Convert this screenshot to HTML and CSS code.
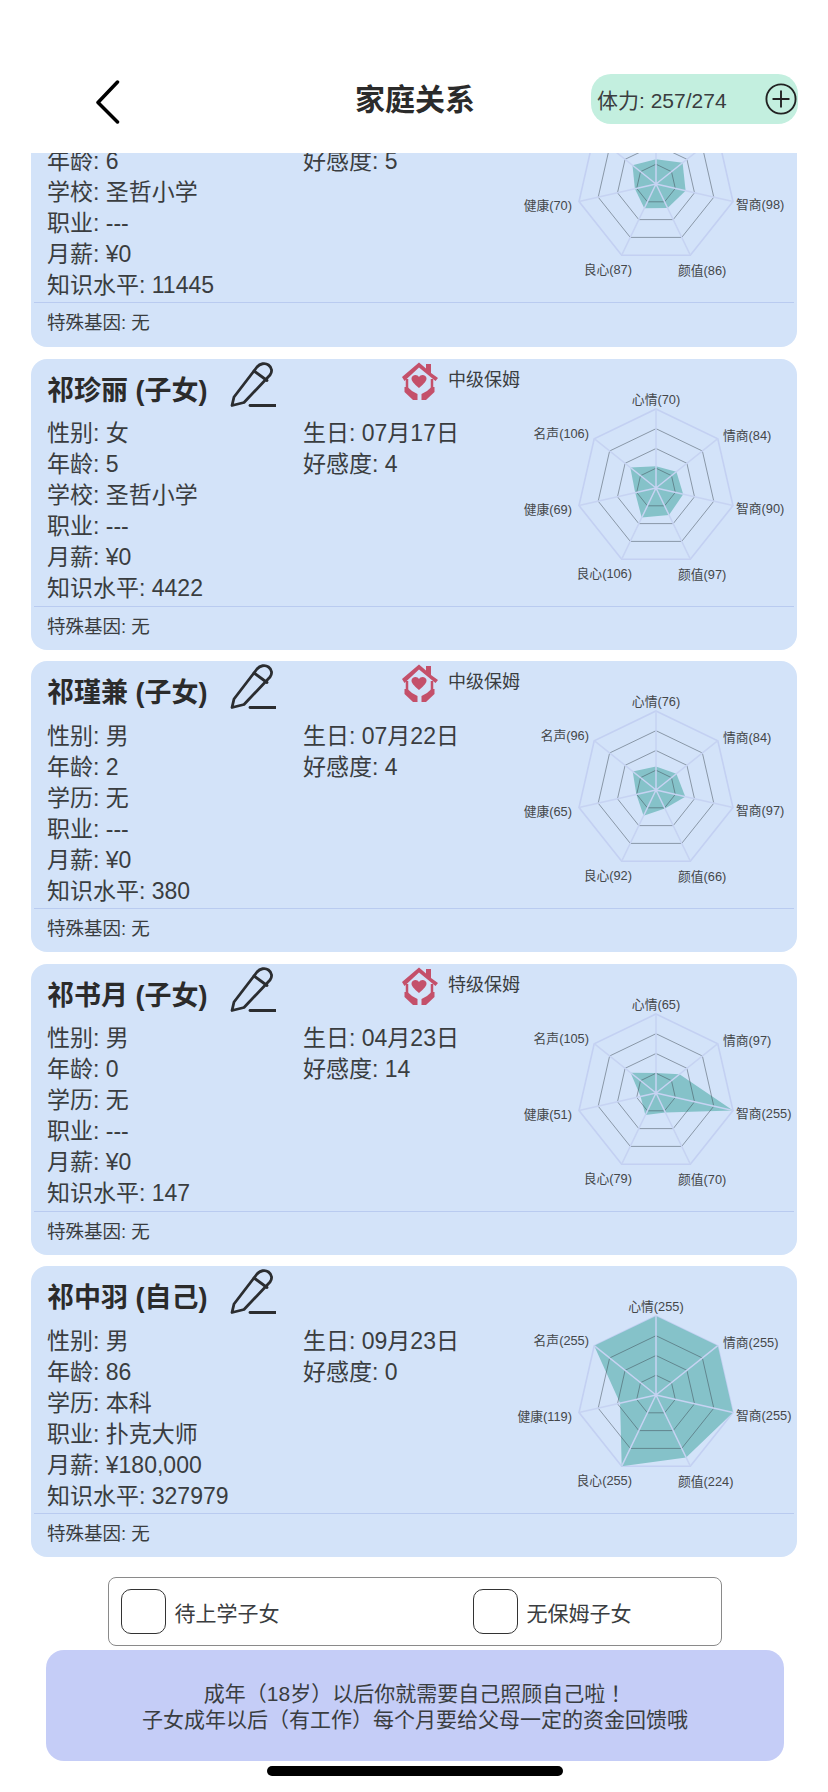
FILE: index.html
```html
<!DOCTYPE html>
<html lang="zh-CN">
  <head>
    <meta charset="utf-8">
    <title>家庭关系</title>
    <link rel="stylesheet" href="styles.css">
  </head>
  <body>
    <!-- shared drawings -->
    <svg class="defs" width="0" height="0">
      <defs>
        <g id="radar-outer">
          <polygon class="ring-outer" points="0,-79 61.8,-49.3 77,17.6 34.3,71.2 -34.3,71.2 -77,17.6 -61.8,-49.3"/>
        </g>
        <g id="radar-lines">
          <polygon class="ring" points="0,-59.3 46.4,-37 57.8,13.2 25.7,53.4 -25.7,53.4 -57.8,13.2 -46.4,-37"/>
          <polygon class="ring" points="0,-39.5 30.9,-24.7 38.5,8.8 17.2,35.6 -17.2,35.6 -38.5,8.8 -30.9,-24.7"/>
          <polygon class="ring" points="0,-19.8 15.5,-12.3 19.3,4.4 8.6,17.8 -8.6,17.8 -19.3,4.4 -15.5,-12.3"/>
          <path class="spoke" d="M0 0L0 -79M0 0L61.8 -49.3M0 0L77 17.6M0 0L34.3 71.2M0 0L-34.3 71.2M0 0L-77 17.6M0 0L-61.8 -49.3"/>
        </g>
        <g id="pencil">
          <path class="pencil-line" d="M2 43.5L4 35L27 5C30 1.5 35 0.5 38.5 3C42 5.5 42.5 10 40 13L14 40.5Z"/>
          <path class="pencil-line" d="M24 9L37 18.5"/>
          <path class="pencil-line" d="M20 43.5L46 43.5"/>
        </g>
        <g id="nanny">
          <path class="nanny-roof" d="M0 15L17 0.5L24 6.5L24 2L29 2L29 11L36 16L33.5 19L17 5.5L2.5 19Z"/>
          <path class="nanny-wall" d="M5 17L5 26M30 17L30 26"/>
          <path class="nanny-heart" d="M17 26C11 21 9.5 18.5 9.5 16.5C9.5 14.5 11.5 13 13.5 13C15 13 16.2 13.8 17 15C17.8 13.8 19 13 20.5 13C22.5 13 24.5 14.5 24.5 16.5C24.5 18.5 23 21 17 26Z"/>
          <path class="nanny-heart" d="M2.5 25L5.5 25L10 29L15.5 32L15.5 38L11 38L2.5 30ZM32.5 25L29.5 25L25 29L19.5 32L19.5 38L24 38L32.5 30Z"/>
        </g>
      </defs>
    </svg>

    <header class="topbar">
      <div class="topbar-left">
        <svg class="back" width="24" height="44" viewBox="0 0 24 44">
          <path d="M21.5 2L2 22.5L21.5 42"/>
        </svg>
      </div>
      <h1 class="title">家庭关系</h1>
      <div class="topbar-right">
        <div class="stamina">
          <span>体力: 257/274</span>
          <svg class="plus" width="32" height="32" viewBox="0 0 34 34">
            <circle cx="17" cy="17" r="15.5"/>
            <path d="M8 17L26 17M17 8L17 26"/>
          </svg>
        </div>
      </div>
    </header>

    <main class="list">
      <section class="card card-cut">
        <div class="card-main">
          <div class="card-info">
            <div class="facts">
              <div class="facts-col">
                <div>年龄: 6</div>
                <div>学校: 圣哲小学</div>
                <div>职业: ---</div>
                <div>月薪: ¥0</div>
                <div>知识水平: 11445</div>
              </div>
              <div class="facts-col">
                <div>好感度: 5</div>
              </div>
            </div>
          </div>
          <svg class="radar" width="280" height="200" viewBox="-140 -100 280 200">
            <use href="#radar-outer"/>
            <polygon class="value" points="0,-24.8 26.6,-21.2 29.6,6.8 11.6,24 -11.7,24.3 -21.1,4.8 -23.5,-18.7"/>
            <use href="#radar-lines"/>
            <text x="80" y="24.5">智商(98)</text>
            <text x="22" y="90.5">颜值(86)</text>
            <text class="end" x="-24" y="89.5">良心(87)</text>
            <text class="end" x="-84" y="25.5">健康(70)</text>
          </svg>
        </div>
        <div class="gene">特殊基因: 无</div>
      </section>

      <section class="card">
        <div class="card-main">
          <div class="card-info">
            <div class="card-head">
              <h2 class="name">祁珍丽 (子女)</h2>
              <svg class="pencil" width="46" height="45" viewBox="0 0 46 45"><use href="#pencil"/></svg>
              <div class="nanny">
                <svg width="36" height="38" viewBox="0 0 36 38"><use href="#nanny"/></svg>
                <span>中级保姆</span>
              </div>
            </div>
            <div class="facts">
              <div class="facts-col">
                <div>性别: 女</div>
                <div>年龄: 5</div>
                <div>学校: 圣哲小学</div>
                <div>职业: ---</div>
                <div>月薪: ¥0</div>
                <div>知识水平: 4422</div>
              </div>
              <div class="facts-col">
                <div>生日: 07月17日</div>
                <div>好感度: 4</div>
              </div>
            </div>
          </div>
          <svg class="radar" width="280" height="200" viewBox="-140 -100 280 200">
            <use href="#radar-outer"/>
            <polygon class="value" points="0,-21.7 20.4,-16.2 27.2,6.2 13,27.1 -14.3,29.6 -20.8,4.8 -25.7,-20.5"/>
            <use href="#radar-lines"/>
            <text class="mid" x="0" y="-84">心情(70)</text>
            <text x="67" y="-48">情商(84)</text>
            <text x="80" y="24.5">智商(90)</text>
            <text x="22" y="90.5">颜值(97)</text>
            <text class="end" x="-24" y="89.5">良心(106)</text>
            <text class="end" x="-84" y="25.5">健康(69)</text>
            <text class="end" x="-67" y="-50">名声(106)</text>
          </svg>
        </div>
        <div class="gene">特殊基因: 无</div>
      </section>

      <section class="card">
        <div class="card-main">
          <div class="card-info">
            <div class="card-head">
              <h2 class="name">祁瑾兼 (子女)</h2>
              <svg class="pencil" width="46" height="45" viewBox="0 0 46 45"><use href="#pencil"/></svg>
              <div class="nanny">
                <svg width="36" height="38" viewBox="0 0 36 38"><use href="#nanny"/></svg>
                <span>中级保姆</span>
              </div>
            </div>
            <div class="facts">
              <div class="facts-col">
                <div>性别: 男</div>
                <div>年龄: 2</div>
                <div>学历: 无</div>
                <div>职业: ---</div>
                <div>月薪: ¥0</div>
                <div>知识水平: 380</div>
              </div>
              <div class="facts-col">
                <div>生日: 07月22日</div>
                <div>好感度: 4</div>
              </div>
            </div>
          </div>
          <svg class="radar" width="280" height="200" viewBox="-140 -100 280 200">
            <use href="#radar-outer"/>
            <polygon class="value" points="0,-23.5 20.4,-16.2 29.3,6.7 8.9,18.4 -12.4,25.7 -19.6,4.5 -23.3,-18.6"/>
            <use href="#radar-lines"/>
            <text class="mid" x="0" y="-84">心情(76)</text>
            <text x="67" y="-48">情商(84)</text>
            <text x="80" y="24.5">智商(97)</text>
            <text x="22" y="90.5">颜值(66)</text>
            <text class="end" x="-24" y="89.5">良心(92)</text>
            <text class="end" x="-84" y="25.5">健康(65)</text>
            <text class="end" x="-67" y="-50">名声(96)</text>
          </svg>
        </div>
        <div class="gene">特殊基因: 无</div>
      </section>

      <section class="card">
        <div class="card-main">
          <div class="card-info">
            <div class="card-head">
              <h2 class="name">祁书月 (子女)</h2>
              <svg class="pencil" width="46" height="45" viewBox="0 0 46 45"><use href="#pencil"/></svg>
              <div class="nanny">
                <svg width="36" height="38" viewBox="0 0 36 38"><use href="#nanny"/></svg>
                <span>特级保姆</span>
              </div>
            </div>
            <div class="facts">
              <div class="facts-col">
                <div>性别: 男</div>
                <div>年龄: 0</div>
                <div>学历: 无</div>
                <div>职业: ---</div>
                <div>月薪: ¥0</div>
                <div>知识水平: 147</div>
              </div>
              <div class="facts-col">
                <div>生日: 04月23日</div>
                <div>好感度: 14</div>
              </div>
            </div>
          </div>
          <svg class="radar" width="280" height="200" viewBox="-140 -100 280 200">
            <use href="#radar-outer"/>
            <polygon class="value" points="0,-20.1 23.5,-18.7 77,17.6 9.4,19.5 -10.6,22.1 -15.4,3.5 -25.4,-20.3"/>
            <use href="#radar-lines"/>
            <text class="mid" x="0" y="-84">心情(65)</text>
            <text x="67" y="-48">情商(97)</text>
            <text x="80" y="24.5">智商(255)</text>
            <text x="22" y="90.5">颜值(70)</text>
            <text class="end" x="-24" y="89.5">良心(79)</text>
            <text class="end" x="-84" y="25.5">健康(51)</text>
            <text class="end" x="-67" y="-50">名声(105)</text>
          </svg>
        </div>
        <div class="gene">特殊基因: 无</div>
      </section>

      <section class="card">
        <div class="card-main">
          <div class="card-info">
            <div class="card-head">
              <h2 class="name">祁中羽 (自己)</h2>
              <svg class="pencil" width="46" height="45" viewBox="0 0 46 45"><use href="#pencil"/></svg>
            </div>
            <div class="facts">
              <div class="facts-col">
                <div>性别: 男</div>
                <div>年龄: 86</div>
                <div>学历: 本科</div>
                <div>职业: 扑克大师</div>
                <div>月薪: ¥180,000</div>
                <div>知识水平: 327979</div>
              </div>
              <div class="facts-col">
                <div>生日: 09月23日</div>
                <div>好感度: 0</div>
              </div>
            </div>
          </div>
          <svg class="radar" width="280" height="200" viewBox="-140 -100 280 200">
            <use href="#radar-outer"/>
            <polygon class="value" points="0,-79 61.8,-49.3 77,17.6 30.1,62.5 -34.3,71.2 -35.9,8.2 -61.8,-49.3"/>
            <use href="#radar-lines"/>
            <text class="mid" x="0" y="-84">心情(255)</text>
            <text x="67" y="-48">情商(255)</text>
            <text x="80" y="24.5">智商(255)</text>
            <text x="22" y="90.5">颜值(224)</text>
            <text class="end" x="-24" y="89.5">良心(255)</text>
            <text class="end" x="-84" y="25.5">健康(119)</text>
            <text class="end" x="-67" y="-50">名声(255)</text>
          </svg>
        </div>
        <div class="gene">特殊基因: 无</div>
      </section>
    </main>

    <div class="filters">
      <label class="filter"><span class="check"></span>待上学子女</label>
      <label class="filter"><span class="check"></span>无保姆子女</label>
    </div>

    <div class="notice">
      <div>成年（18岁）以后你就需要自己照顾自己啦<span class="bang" lang="zh-TW">！</span></div>
      <div>子女成年以后（有工作）每个月要给父母一定的资金回馈哦</div>
    </div>

    <div class="home-bar"></div>
  </body>
</html>
```

FILE: styles.css
```css
* {
  box-sizing: border-box;
}

body {
  margin: 0;
  width: 828px;
  height: 1792px;
  overflow: hidden;
  background-color: #fff;
  color: #3a3d40;
  font-family: "Liberation Sans", "Noto Sans CJK SC", sans-serif;
}

.defs {
  position: absolute;
}

/* top bar */
.topbar {
  display: grid;
  grid-template-columns: 1fr auto 1fr;
  align-items: center;
  height: 153px;
  padding-top: 44px;
}

.topbar-left {
  padding: 6px 0 0 96px;
}

.back {
  display: block;
}

.back path {
  fill: none;
  stroke: #000;
  stroke-width: 3.5;
  stroke-linecap: round;
  stroke-linejoin: round;
}

.title {
  margin: -4px 0 0;
  padding-left: 2px;
  color: #2b2b2b;
  font-size: 30px;
  font-weight: bold;
}

.topbar-right {
  display: flex;
  justify-content: flex-end;
  padding-right: 30px;
}

.stamina {
  display: flex;
  align-items: center;
  justify-content: space-between;
  width: 207px;
  height: 50px;
  padding: 0 1px 0 6px;
  border-radius: 20px;
  background-color: #c3efdf;
  font-size: 21px;
}

.plus circle,
.plus path {
  fill: none;
  stroke: #222;
  stroke-width: 2;
}

/* cards */
.list {
  display: flex;
  flex-direction: column;
  gap: 11.5px;
  height: 1404.5px;
  padding: 0 31px;
  overflow: hidden;
}

.card {
  flex: none;
  height: 291px;
  border-radius: 16px;
  background-color: #d3e3f9;
}

.card-cut {
  height: 194px;
  border-radius: 0 0 16px 16px;
}

.card-main {
  display: flex;
  height: 248px;
  border-bottom: 1.5px solid #b9cbf0;
  margin: 0 3px;
}

.card-cut .card-main {
  height: 150px;
}

.card-info {
  flex: 1;
  min-width: 0;
  padding: 3px 0 0 13px;
}

.card-cut .card-info {
  padding-top: 0;
}

.card-cut .facts {
  margin-top: -7px;
}

.card-head {
  display: flex;
  height: 56.5px;
}

.name {
  flex: none;
  width: 183px;
  margin: 11px 0 0;
  color: #2b2b2b;
  font-size: 27px;
  line-height: 36px;
  font-weight: bold;
  white-space: nowrap;
}

.pencil {
  flex: none;
}

.pencil-line {
  fill: none;
  stroke: #2b2d30;
  stroke-width: 2.8;
  stroke-linecap: round;
  stroke-linejoin: round;
}

.nanny {
  display: flex;
  flex: none;
  gap: 10px;
  height: 38px;
  margin-left: 126px;
  font-size: 18px;
  line-height: 36px;
  white-space: nowrap;
}

.nanny-roof,
.nanny-heart {
  fill: #c4506a;
}

.nanny-wall {
  fill: none;
  stroke: #c4506a;
  stroke-width: 2.5;
}

.facts {
  display: flex;
  font-size: 23px;
  line-height: 31px;
}

.facts-col:first-child {
  width: 256px;
}

.radar {
  flex: none;
  margin: 29px -2px 0 0;
}

.card-cut .radar {
  margin-top: -69px;
}

.radar text {
  fill: #44474a;
  font-size: 12.8px;
}

.radar text.mid {
  text-anchor: middle;
}

.radar text.end {
  text-anchor: end;
}

.ring-outer {
  fill: none;
  stroke: #c3d0f2;
  stroke-width: 1.6;
}

.ring {
  fill: none;
  stroke: #3f4a55;
  stroke-width: 0.5;
}

.spoke {
  fill: none;
  stroke: #c6d3f2;
  stroke-width: 1.5;
}

.value {
  fill: #85c2c9;
}

.gene {
  padding-left: 16px;
  font-size: 18.5px;
  line-height: 40px;
}

/* bottom */
.filters {
  display: flex;
  width: 614px;
  height: 69px;
  margin: 19.5px 0 0 108px;
  padding: 11px 0 0 11.5px;
  border: 1.5px solid #8a8a8a;
  border-radius: 8px;
}

.filter {
  display: flex;
  flex: none;
  align-items: center;
  gap: 9px;
  width: 352px;
  height: 45px;
  font-size: 21px;
}

.filter:last-child {
  width: 240px;
}

.check {
  width: 45px;
  height: 45px;
  border: 1.5px solid #333;
  border-radius: 10px;
}

.notice {
  display: flex;
  flex-direction: column;
  justify-content: center;
  width: 738px;
  height: 111px;
  margin: 4px 0 0 46px;
  border-radius: 18px;
  background-color: #c5cdf7;
  font-size: 21px;
  line-height: 26px;
  text-align: center;
}

.bang {
  font-family: "Noto Sans CJK TC", sans-serif;
}

.home-bar {
  width: 296px;
  height: 10px;
  margin: 5px 0 0 267px;
  border-radius: 5px;
  background-color: #000;
}
```
